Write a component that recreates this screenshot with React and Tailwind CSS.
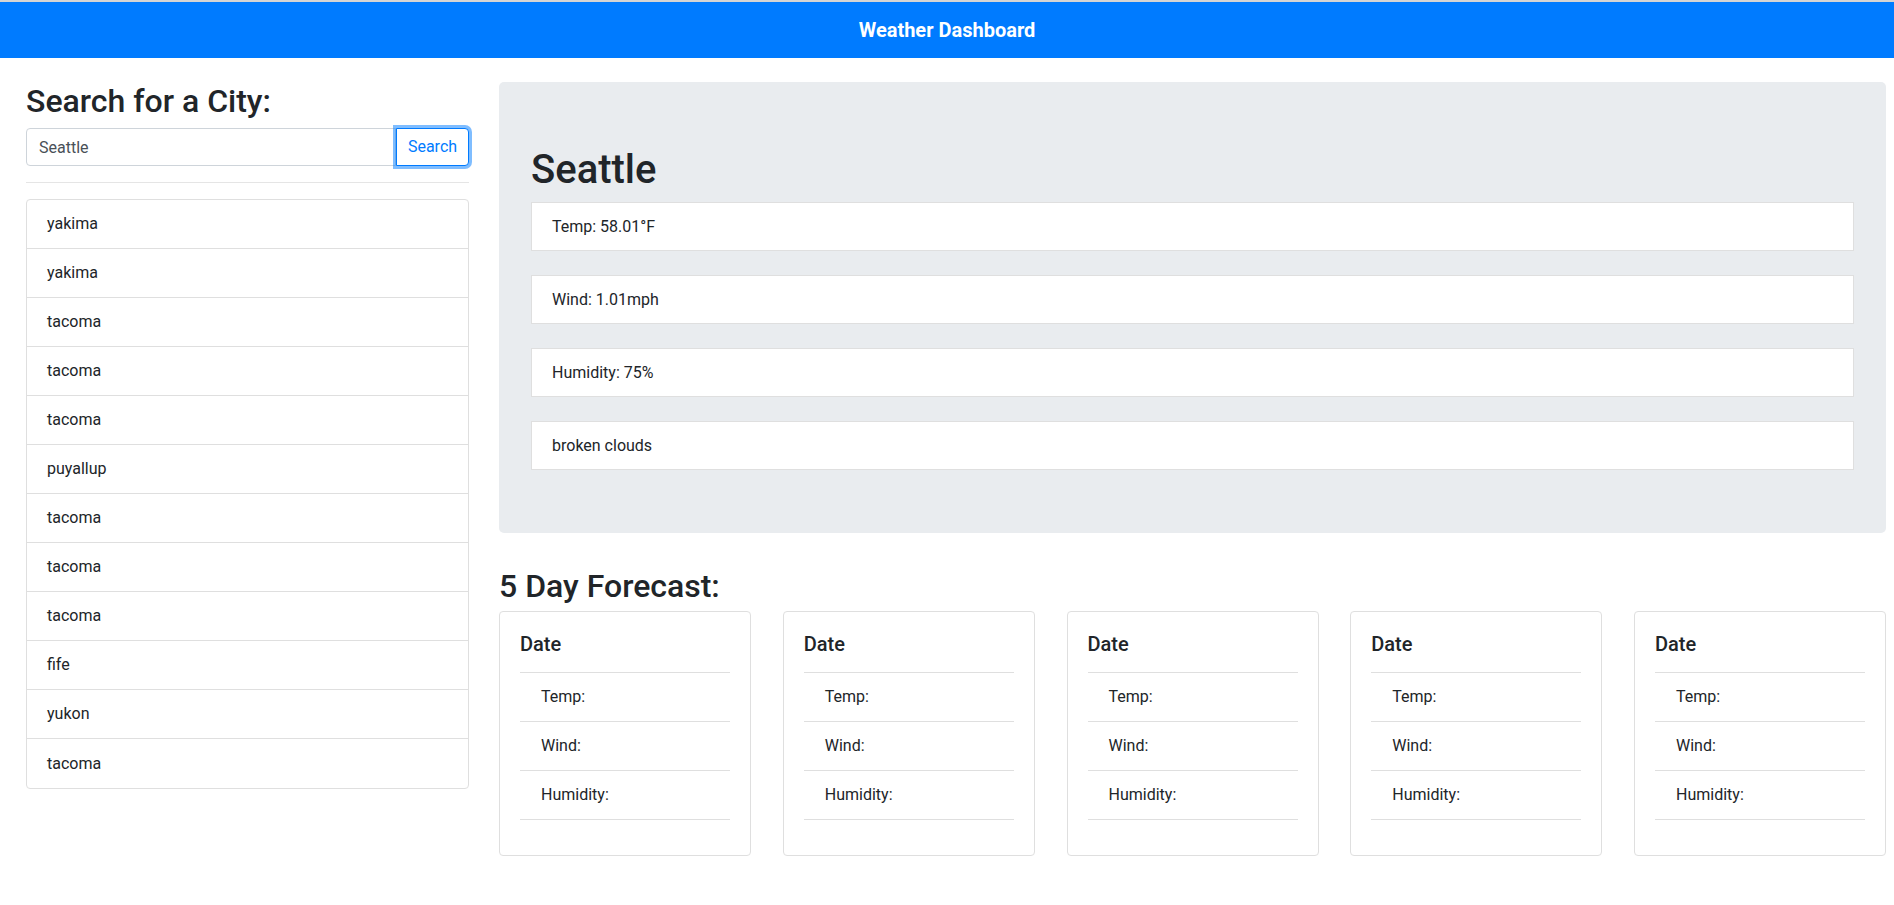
import React from "react";

const cities = ["yakima","yakima","tacoma","tacoma","tacoma","puyallup","tacoma","tacoma","tacoma","fife","yukon","tacoma"];
const current = ["Temp: 58.01°F","Wind: 1.01mph","Humidity: 75%","broken clouds"];

function ForecastCard() {
  return (
    <div className="w-[252px] h-[245px] border border-[#dfdfdf] rounded-[4px] bg-white px-[20px] pt-[20px]">
      <h5 className="text-[20px] leading-[24px] font-medium text-[#212529]">Date</h5>
      <ul className="mt-[16px] border-t border-[#dfdfdf]">
        {["Temp:","Wind:","Humidity:"].map((t) => (
          <li key={t} className="h-[49px] border-b border-[#dfdfdf] pl-[21px] flex items-center text-[16px] text-[#212529]">{t}</li>
        ))}
      </ul>
    </div>
  );
}

export default function App() {
  return (
    <div className="min-h-[905px] bg-white text-[#212529]" style={{ fontFamily: "Roboto, 'Noto Sans', sans-serif" }}>
      <div className="h-[2px] bg-[#d4d4d4]"></div>
      <header className="h-[56px] bg-[#007bff] flex items-center justify-center">
        <h1 className="text-white font-bold text-[20px] leading-[24px]">Weather Dashboard</h1>
      </header>
      <main className="flex pl-[26px] pr-[8px] pt-[24px] gap-[30px]">
        <section className="w-[443px] shrink-0">
          <h3 className="text-[32px] leading-[38px] font-medium">Search for a City:</h3>
          <div className="flex mt-[8px] h-[38px]">
            <input
              readOnly
              value="Seattle"
              className="flex-1 min-w-0 h-[38px] border border-[#ced4da] rounded-l-[4px] px-[12px] text-[16px] text-[#495057] outline-none"
            />
            <button className="w-[73px] h-[38px] border border-[#007bff] rounded-r-[4px] text-[#007bff] text-[16px] bg-white shadow-[0_0_0_3px_rgba(0,123,255,0.5)] relative z-10">Search</button>
          </div>
          <hr className="mt-[16px] border-t border-black/10" />
          <ul className="mt-[16px] border border-[#dfdfdf] rounded-[4px]">
            {cities.map((c, i) => (
              <li key={i} className={"h-[49px] flex items-center pl-[20px] text-[16px] " + (i < cities.length - 1 ? "border-b border-[#dfdfdf]" : "")}>{c}</li>
            ))}
          </ul>
        </section>
        <section className="flex-1 min-w-0">
          <div className="bg-[#e9ecef] rounded-[5px] px-[32px] pt-[64px] pb-[63px]">
            <h1 className="text-[40px] leading-[48px] font-medium mb-[8px]">Seattle</h1>
            <div className="flex flex-col gap-[24px]">
              {current.map((t) => (
                <div key={t} className="h-[49px] bg-white border border-black/[0.125] flex items-center pl-[20px] text-[16px]">{t}</div>
              ))}
            </div>
          </div>
          <h3 className="mt-[34px] text-[32px] leading-[38px] font-medium">5 Day Forecast:</h3>
          <div className="mt-[6px] flex justify-between">
            <ForecastCard />
            <ForecastCard />
            <ForecastCard />
            <ForecastCard />
            <ForecastCard />
          </div>
        </section>
      </main>
    </div>
  );
}
